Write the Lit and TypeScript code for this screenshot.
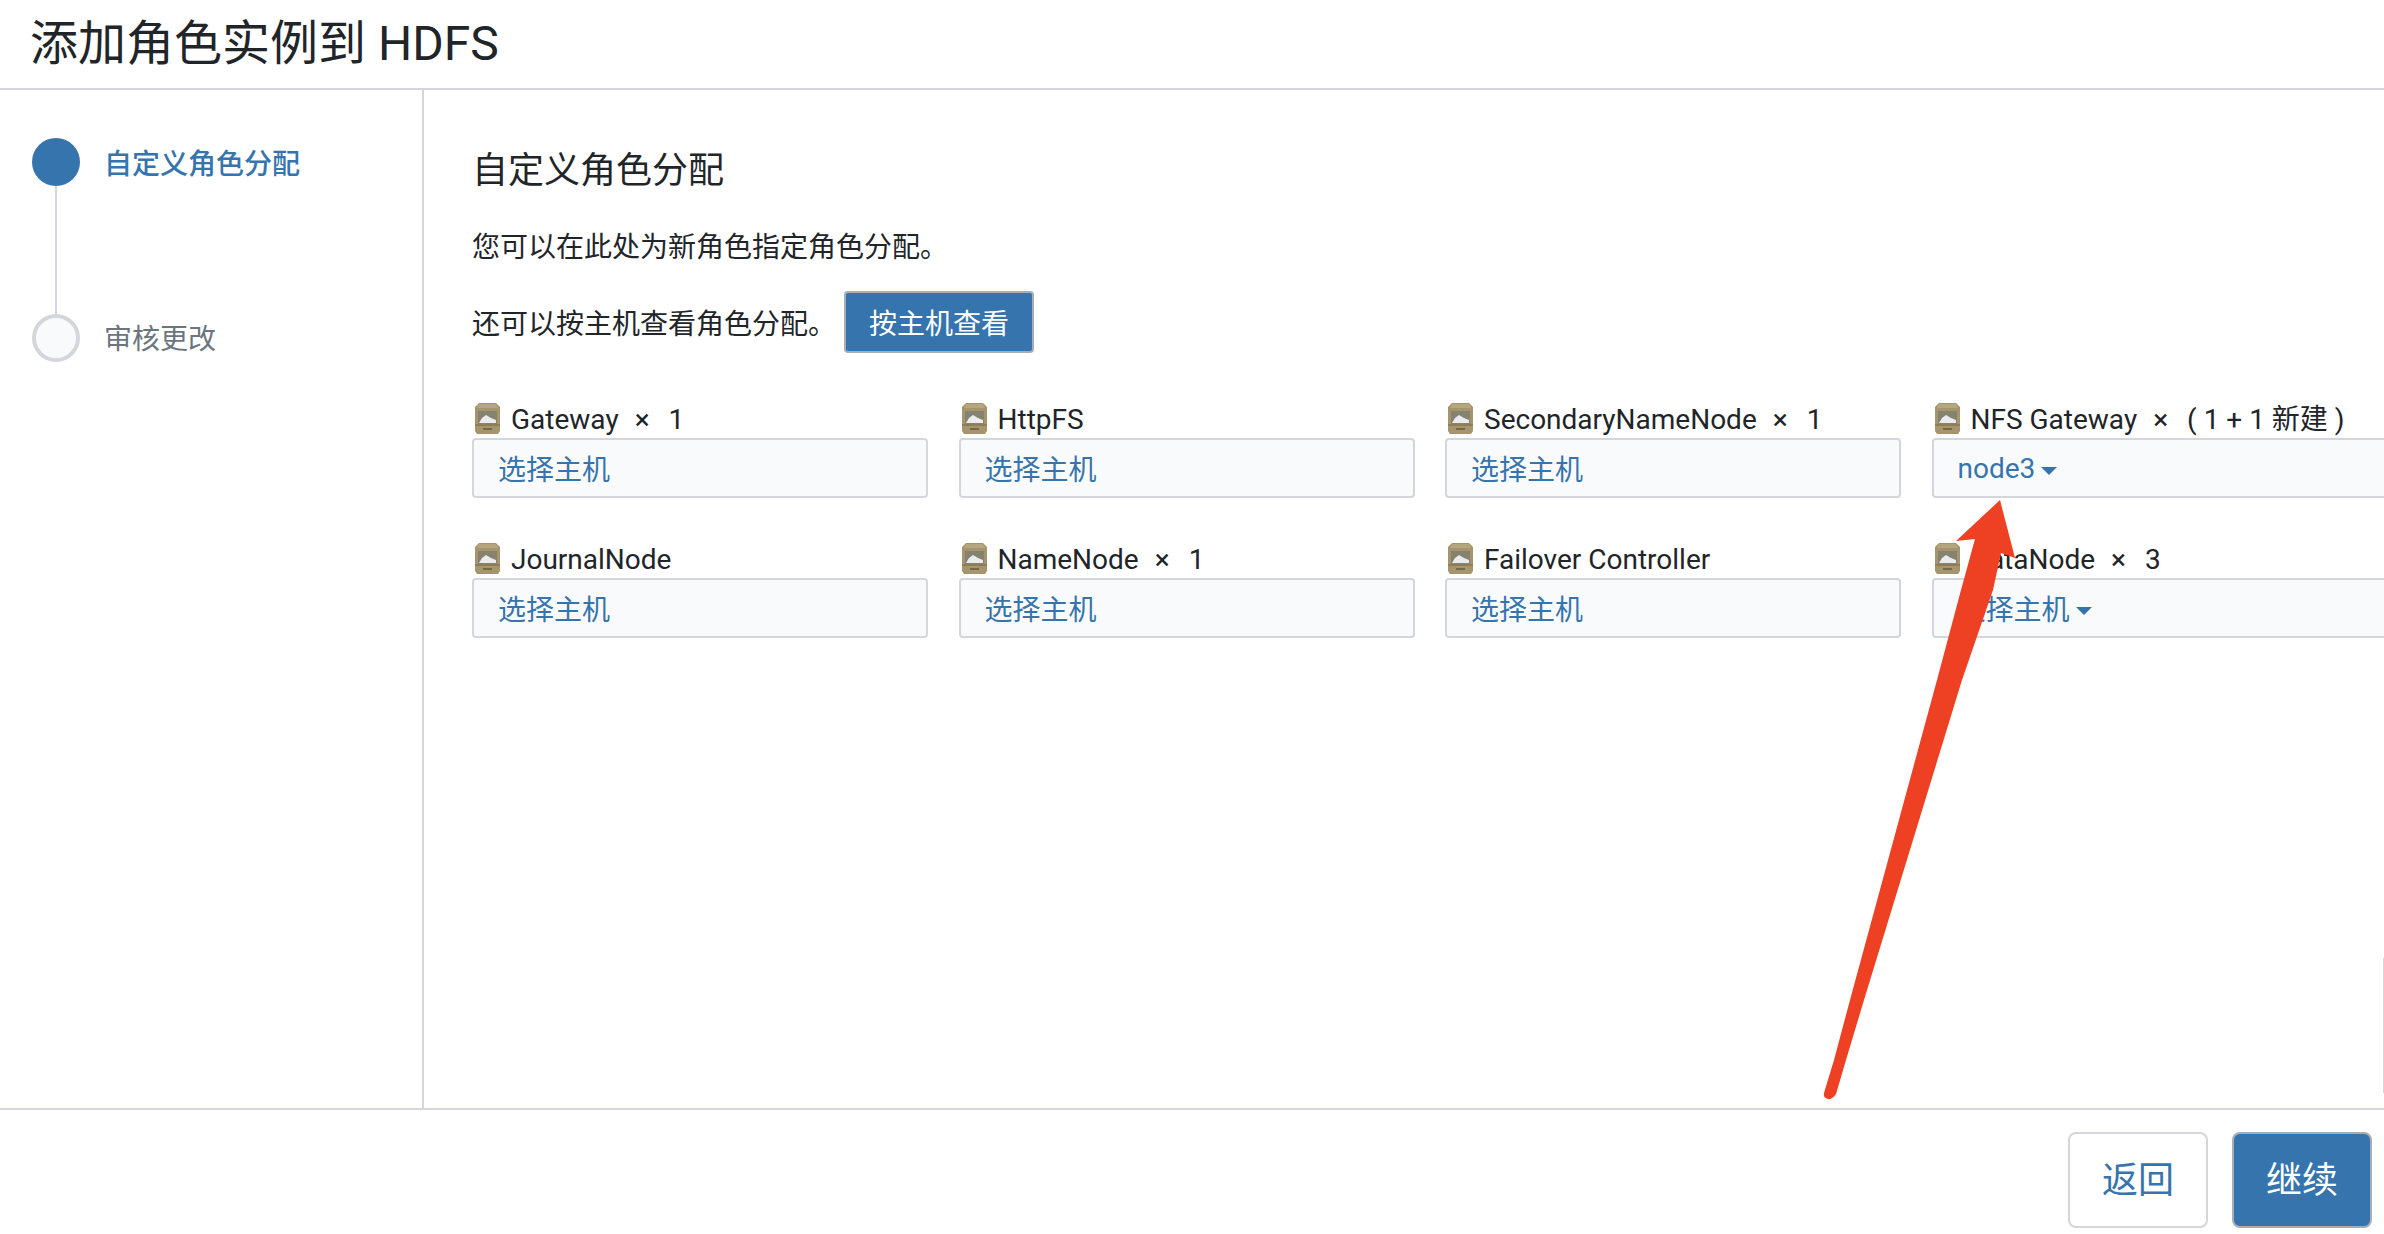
import { LitElement, html, css, svg } from "lit";
import { customElement } from "lit/decorators.js";

interface Role {
  name: string;
  count?: string;
  value: string;
  caret?: boolean;
}

const ROLES: Role[] = [
  { name: "Gateway", count: "1", value: "选择主机" },
  { name: "HttpFS", value: "选择主机" },
  { name: "SecondaryNameNode", count: "1", value: "选择主机" },
  { name: "NFS Gateway", count: "( 1 + 1 新建 )", value: "node3", caret: true },
  { name: "JournalNode", value: "选择主机" },
  { name: "NameNode", count: "1", value: "选择主机" },
  { name: "Failover Controller", value: "选择主机" },
  { name: "DataNode", count: "3", value: "选择主机", caret: true },
];

const roleIcon = svg`
  <path d="M4 0H21L25 4V28L23 31H2L0 28V4Z" fill="#a6956c"/>
  <path d="M4 1H21L23 5H2Z" fill="#b5a67f"/>
  <rect x="3" y="8" width="19" height="13" fill="#85826f"/>
  <path d="M4 20L7 15L11 12L16 15L21 17V20Z" fill="#e9ebef"/>
  <rect x="0" y="21" width="25" height="2" fill="#8d7e58"/>
  <rect x="8" y="25" width="9" height="2" fill="#75684a"/>
`;

@customElement("app-root")
export class AppRoot extends LitElement {
  static styles = css`
    :host {
      display: block;
      position: relative;
      width: 2384px;
      height: 1234px;
      overflow: hidden;
      background: #fff;
      font-family: Roboto, "Noto Sans CJK SC", sans-serif;
      font-size: 28px;
      color: #212529;
    }
    .page { display: flex; flex-direction: column; height: 100%; }
    .header {
      flex: none;
      height: 88px;
      border-bottom: 2px solid #d4d6dc;
      padding-left: 30px;
      display: flex;
      align-items: center;
    }
    h1 { margin: 0; font-size: 48px; font-weight: 400; line-height: 1; }
    .main { flex: 1; min-height: 0; display: flex; }
    .side {
      flex: none;
      width: 422px;
      box-sizing: border-box;
      padding: 48px 0 0 32px;
    }
    .divider { flex: none; width: 2px; background: #d4d6dc; }
    .step { display: flex; gap: 24px; }
    .marker { display: flex; flex-direction: column; align-items: center; width: 48px; }
    .dot { width: 48px; height: 48px; border-radius: 50%; box-sizing: border-box; }
    .dot.on { background: #3674ad; }
    .dot.off { background: #f9fafc; border: 4px solid #d4d6dc; }
    .stem { width: 2px; height: 128px; background: #d4d6dc; }
    .step-label { height: 48px; line-height: 52px; color: #6c757d; }
    .step-label.on { color: #3674ad; font-weight: 500; line-height: 54px; }
    .content { flex: 1; min-width: 0; padding: 56px 0 0 48px; }
    h2 { margin: 0; font-size: 36px; font-weight: 400; line-height: 50px; }
    .para { margin: 32px 0 0; line-height: 40px; }
    .para-row { margin: 23px 0 0; display: flex; align-items: center; gap: 8px; }
    .btn-view {
      box-sizing: border-box;
      width: 190px;
      height: 62px;
      background: #3674ad;
      border: 2px solid #a9adb5;
      border-radius: 4px;
      color: #fff;
      font: inherit;
      padding: 0;
    }
    .grid {
      margin-top: 49px;
      display: grid;
      grid-template-columns: repeat(4, 456px);
      column-gap: 30.5px;
      row-gap: 44px;
    }
    .role-label {
      height: 36px;
      display: flex;
      align-items: flex-start;
      white-space: nowrap;
      padding-left: 3px;
      line-height: 35px;
    }
    .role-label svg { flex: none; width: 25px; height: 31px; margin: 1px 11px 0 0; filter: blur(0.4px); }
    .times { margin: 0 19px 0 16px; }
    .select {
      box-sizing: border-box;
      height: 60px;
      background: #f9fafc;
      border: 2px solid #d4d6dc;
      border-radius: 4px;
      padding-left: 24px;
      display: flex;
      align-items: center;
      color: #3674ad;
    }
    .caret {
      width: 0;
      height: 0;
      margin-left: 6px;
      margin-top: 5px;
      border-left: 8px solid transparent;
      border-right: 8px solid transparent;
      border-top: 8px solid #3674ad;
    }
    .footer {
      flex: none;
      height: 126px;
      box-sizing: border-box;
      border-top: 2px solid #d4d6dc;
      padding: 22px 12px 0 0;
      display: flex;
      justify-content: flex-end;
      gap: 24px;
    }
    .btn {
      box-sizing: border-box;
      width: 140px;
      height: 96px;
      border-radius: 8px;
      font: inherit;
      font-size: 36px;
      padding: 0 0 6px;
    }
    .btn.back { background: #fff; border: 2px solid #d4d6dc; color: #3674ad; }
    .btn.next { background: #3674ad; border: 2px solid #a9adb5; color: #fff; }
    .arrow { position: absolute; left: 0; top: 0; pointer-events: none; }
    .edge {
      position: absolute;
      right: 0;
      top: 958px;
      width: 1px;
      height: 135px;
      background: #d4d6dc;
    }
  `;

  private renderRole(r: Role) {
    return html`
      <div class="role">
        <div class="role-label">
          <svg viewBox="0 0 25 31">${roleIcon}</svg>
          <span>${r.name}</span>
          ${r.count
            ? html`<span class="times">×</span><span>${r.count}</span>`
            : null}
        </div>
        <div class="select">
          <span>${r.value}</span>
          ${r.caret ? html`<i class="caret"></i>` : null}
        </div>
      </div>
    `;
  }

  render() {
    return html`
      <div class="page">
        <header class="header"><h1>添加角色实例到 HDFS</h1></header>
        <div class="main">
          <aside class="side">
            <div class="step">
              <div class="marker">
                <div class="dot on"></div>
                <div class="stem"></div>
              </div>
              <div class="step-label on">自定义角色分配</div>
            </div>
            <div class="step">
              <div class="marker"><div class="dot off"></div></div>
              <div class="step-label">审核更改</div>
            </div>
          </aside>
          <div class="divider"></div>
          <section class="content">
            <h2>自定义角色分配</h2>
            <p class="para">您可以在此处为新角色指定角色分配。</p>
            <div class="para-row">
              <span>还可以按主机查看角色分配。</span>
              <button class="btn-view">按主机查看</button>
            </div>
            <div class="grid">${ROLES.map((r) => this.renderRole(r))}</div>
          </section>
        </div>
        <footer class="footer">
          <button class="btn back">返回</button>
          <button class="btn next">继续</button>
        </footer>
      </div>
      <div class="edge"></div>
      <svg class="arrow" width="2384" height="1234" viewBox="0 0 2384 1234">
        <path
          d="M2000 500L2015 558L2001 553L1993 590L1962 680L1864 1000L1846 1060L1836 1094Q1832 1100 1828 1099Q1823 1098 1824 1093L1834 1060L1850 1000L1937 680L1961 590L1975 539L1956 541Z"
          fill="#ee4123"
        />
      </svg>
    `;
  }
}
